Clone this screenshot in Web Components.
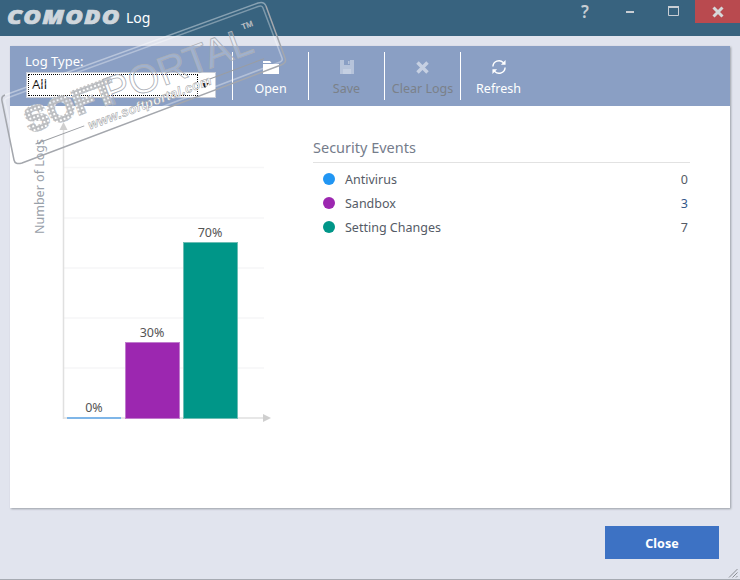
<!DOCTYPE html>
<html><head><meta charset="utf-8">
<style>
html,body{margin:0;padding:0;background:#e1e4ee;}
body{width:740px;height:580px;overflow:hidden;position:relative;font-family:"Noto Sans","Open Sans",sans-serif;}
</style></head><body>
<log-window></log-window>
<script>
const FONT='"Noto Sans","Open Sans",sans-serif';
function def(name,html){
  customElements.define(name,class extends HTMLElement{
    constructor(){super();const r=this.attachShadow({mode:'open'});r.innerHTML=typeof html==='function'?html(this):html;}
  });
}
def('title-bar',`<style>
:host{display:flex;height:36px;background:#38637f;color:#fff;align-items:flex-start;flex:none}
.logo{font:italic 800 20px/1 "Open Sans","Noto Sans",sans-serif;color:#cfd6dc;-webkit-text-stroke:.7px #cfd6dc;letter-spacing:1px;margin:7px 0 0 7px;transform:scaleX(1.2);transform-origin:left;width:119px;white-space:nowrap}
.name{font:14px/20px ${FONT};color:#fff;margin:8px 0 0 0}
.sp{flex:1}
.b{display:flex;justify-content:center;align-items:center;height:23px}
.b svg{display:block}
.help{width:26px;margin-right:12px;font:600 17px/22px ${FONT};color:#c6cdd3}
.x{background:#b94a4f;width:45px}
</style>
<div class="logo">COMODO</div><div class="name">Log</div><div class="sp"></div>
<div class="b help">?</div>
<div class="b" style="width:40px;margin-right:5px"><svg width="10" height="4"><rect y="1" width="8" height="2" x="1" fill="#c9ced4"/></svg></div>
<div class="b" style="width:38px;margin-right:2px"><svg width="12" height="11"><path d="M.5 1.5h10v8H.5z" fill="none" stroke="#c9ced4"/><rect width="11" height="2" fill="#c9ced4"/></svg></div>
<div class="b x"><svg width="12" height="12" viewBox="0 0 12 12"><path d="M1.5 1.5l9 9M10.5 1.5l-9 9" stroke="#d6d8da" stroke-width="3"/></svg></div>`);

def('tool-button',h=>`<style>
:host{display:flex;flex-direction:column;align-items:center;width:75px;flex:none;color:${h.hasAttribute('off')?'#7b8189':'#fff'};font:12.5px/18px ${FONT};}
.i{height:24px;margin-top:9px;display:flex;align-items:center;justify-content:center}
.t{white-space:nowrap;margin-top:1px}
</style><div class="i"><slot name="icon"></slot></div><div class="t"><slot></slot></div>`);

def('log-select',`<style>
:host{display:block;width:190px}
.l{font:13px/17px ${FONT};color:#fff;margin-left:-1px}
.s{height:26px;background:#fff;border:1px solid #c8cdd8;box-sizing:border-box;margin-top:2px;display:flex;position:relative;padding:1px}
.v{width:170px;border:1px dotted #000;box-sizing:border-box;font:13px/18px ${FONT};color:#111;padding-left:3px}
svg{position:absolute;right:5px;top:10px}
</style><div class="l">Log Type:</div><div class="s"><div class="v">All</div><svg width="9" height="6"><path d="M0 0h8L4 5z" fill="#111"/></svg></div>`);

def('tool-bar',`<style>
:host{display:flex;height:60px;background:#8a9fc4;flex:none;padding-left:16px;box-sizing:border-box}
.sep{width:1px;height:48px;background:#fff;margin-top:6px;flex:none}
log-select{margin-top:7px;margin-right:16px}
</style>
<log-select></log-select><div class="sep"></div>
<tool-button><svg slot="icon" width="16" height="13" viewBox="0 0 16 13"><path d="M0 0h7l1.500 2H0zM0 3h16v10H0z" fill="#fff"/></svg>Open</tool-button><div class="sep"></div>
<tool-button off><svg slot="icon" width="14" height="14" viewBox="0 0 14 14"><path d="M0 0h14v14H0z" fill="#b6c3da"/><path d="M4 0h6v5H4z" fill="#8a9fc4"/><path d="M8 1h1.500v3H8z" fill="#b6c3da"/><path d="M3 9h8v5H3z" fill="#c4cfe2"/></svg>Save</tool-button><div class="sep"></div>
<tool-button off><svg slot="icon" width="13" height="13" viewBox="0 0 13 13"><path d="M1.500 1.500l10 10M11.500 1.500l-10 10" stroke="#c6d0e2" stroke-width="3.500"/></svg>Clear Logs</tool-button><div class="sep"></div>
<tool-button><svg slot="icon" width="16" height="16" viewBox="0 0 17 17" fill="none" stroke="#fff" stroke-width="1.500"><path d="M2 8a6.500 6.500 0 0 1 11-4.300L14.500 5"/><path d="M15 9a6.500 6.500 0 0 1-11 4.300L2.500 12"/><path d="M15.500 1v5h-5z" fill="#fff" stroke="none"/><path d="M1.500 16v-5h5z" fill="#fff" stroke="none"/></svg>Refresh</tool-button>`);

def('bar-chart',`<style>
:host{display:block;position:relative;width:280px;height:360px;flex:none}
svg{display:block;overflow:visible}
text{font-family:${FONT}}
</style>
<svg width="280" height="360" viewBox="0 0 280 360">
<g stroke="#f6f6f7" stroke-width="1.500"><path d="M54 61.500H254M54 112H254M54 162H254M54 212H254M54 262H254"/></g>
<path d="M53 312H254M53.500 24V313" stroke="#e0e0e0" stroke-width="1.500" fill="none"/>
<path d="M253 308l8 4-8 4z" fill="#cfcfcf"/><path d="M49.500 24l4-8 4 8z" fill="#cfcfcf"/>
<rect x="57" y="311" width="54" height="2" fill="#7fb6e8"/>
<rect x="115.500" y="236.500" width="54" height="76" fill="#9c27b0" stroke="#c07ccd"/>
<rect x="173.500" y="136.500" width="54" height="176" fill="#009688" stroke="#6dbdb4"/>
<g font-size="12.500" fill="#555" text-anchor="middle"><text x="84" y="306">0%</text><text x="142" y="231">30%</text><text x="200" y="131">70%</text></g>
<text transform="translate(34 128) rotate(-90)" text-anchor="start" font-size="12.500" fill="#98a0a9" x="0" y="0">Number of Logs</text>
</svg>`);

def('event-row',h=>`<style>
:host{display:flex;align-items:center;height:24px;font:12.500px/24px ${FONT};color:#555b66;padding-left:10px;padding-right:2px}
i{width:12px;height:12px;border-radius:50%;background:${h.getAttribute('color')};margin-right:10px;margin-top:-2px}
.n{flex:1}
.c{color:${h.getAttribute('ccolor')||'#555b66'}}
</style><i></i><span class="n"><slot></slot></span><span class="c">${h.getAttribute('count')}</span>`);

def('event-list',`<style>
:host{display:block;width:377px;flex:none;margin-top:31px}
h2{font:400 14.500px/21px ${FONT};color:#757c8b;margin:0;padding-bottom:4px;border-bottom:1px solid #e2e2e2;margin-bottom:5px}
</style><h2>Security Events</h2>
<event-row color="#2196f3" count="0">Antivirus</event-row>
<event-row color="#9c27b0" count="3" ccolor="#35588a">Sandbox</event-row>
<event-row color="#009688" count="7">Setting Changes</event-row>`);

def('soft-watermark',`<style>
:host{position:absolute;left:0;top:0;width:320px;height:180px;pointer-events:none;display:block}
svg{display:block;overflow:visible}
text{font-family:"Liberation Sans",sans-serif}
</style>
<svg width="320" height="180" viewBox="0 0 320 180">
<defs><pattern id="d" width="4" height="4" patternUnits="userSpaceOnUse"><rect width="4" height="4" fill="#fff" fill-opacity=".7"/><rect x=".5" y=".5" width="3" height="3" fill="none" stroke="#b0b2b6" stroke-width=".8"/></pattern></defs>
<path d="M5 95L258 3Q264 1 266 6" fill="none" stroke="#fff" stroke-opacity=".4" stroke-width="1.500"/>
<path d="M7 98L258 6.500Q262 5 263 8" fill="none" stroke="#fff" stroke-opacity=".35" stroke-width="1.500"/>
<path d="M266 6L285 58Q287 63 281 65L22 163Q15 165 14 160L2 101Q1 96 5 95" fill="none" stroke="#a4a7ad" stroke-width="1.500"/>
<path d="M263 8L282 58Q283 61 280 62L22 160Q18 161 17 158L5 102Q4 99 7 98" fill="none" stroke="#fff" stroke-opacity=".35" stroke-width="1.500"/>
<g transform="translate(3 97) rotate(-20.500)">
<text x="13" y="43" font-size="34" font-weight="700" letter-spacing="1" fill="url(#d)" stroke="url(#d)" stroke-width="3">SOFT</text>
<text x="96" y="46" font-size="40" fill="#fff" fill-opacity=".2" stroke="#a9adb5" stroke-width=".8">PORTAL</text>
<text x="248" y="21" font-size="8" fill="#fff" stroke="#8f949b" stroke-width=".3">TM</text>
<path d="M14 55.500H66M200 55.500H258" stroke="#9a9da2" stroke-width="1"/>
<text x="70" y="61" font-size="13" font-weight="700" font-style="italic" letter-spacing=".4" fill="#fff" stroke="#9a9da2" stroke-width=".5">www.softportal.com</text>
</g></svg>`);

def('log-window',`<style>
:host{display:flex;flex-direction:column;width:740px;height:580px;position:relative;background:#e1e4ee;color:#555}
.panel{margin:10px 10px 0;height:462px;display:flex;flex-direction:column;background:#fff;box-shadow:1px 1px 2px #9a9ea6;flex:none}
.content{display:flex;flex:1}
bar-chart{margin:0 23px 0 0}
.foot{display:flex;justify-content:flex-end;padding:18px 21px 0 0}
button{width:114px;height:33px;background:#3d72c4;color:#fff;border:0;font:700 12.500px/18px ${FONT};padding:2px 0 0}
.grip{position:absolute;right:2px;bottom:2px}
.edge{position:absolute;left:0;right:0;bottom:0;height:1px;background:#a6aab2}
</style>
<title-bar></title-bar>
<div class="panel"><tool-bar></tool-bar><div class="content"><bar-chart></bar-chart><event-list></event-list></div></div>
<div class="foot"><button>Close</button></div>
<svg class="grip" width="10" height="10"><path d="M9.500 1L1 9.500M9.500 4.500L4.500 9.500M9.500 8L8 9.500" stroke="#8b8e94"/></svg>
<soft-watermark></soft-watermark><div class="edge"></div>`);
</script></body></html>
